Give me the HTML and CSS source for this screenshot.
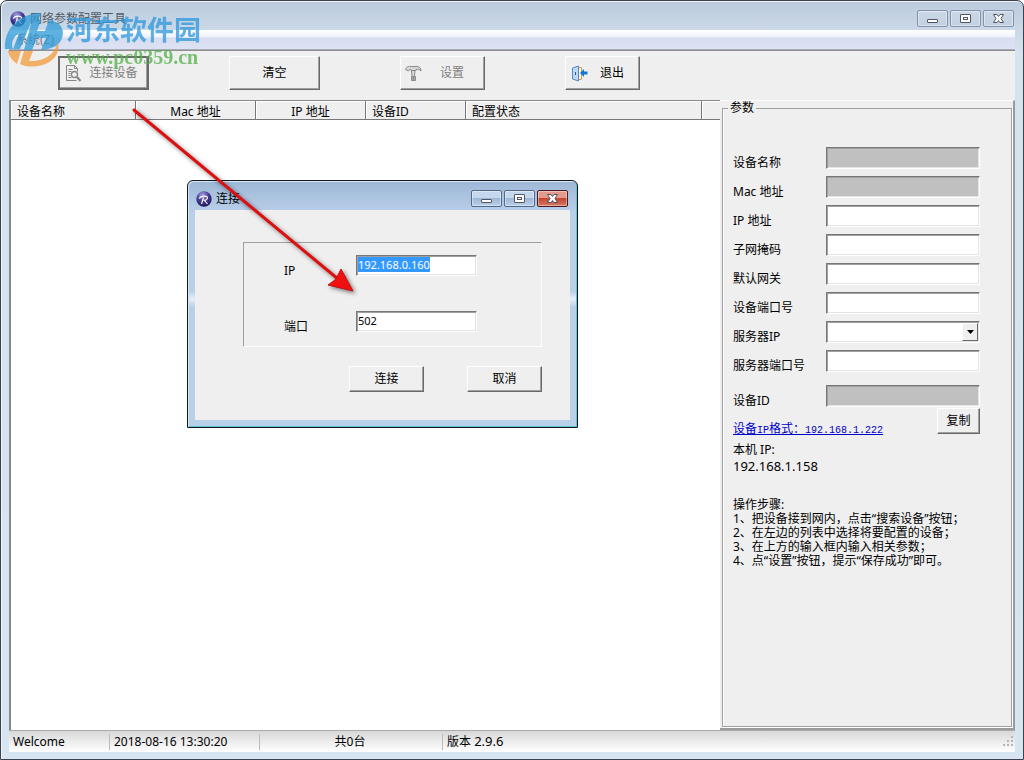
FILE: index.html
```html
<!DOCTYPE html>
<html lang="zh-CN">
  <head>
    <meta charset="UTF-8" />
    <meta name="viewport" content="width=device-width, initial-scale=1.0" />
    <title>网络参数配置工具</title>
    <link rel="stylesheet" href="styles.css">
  </head>
  <body>
    <svg width="0" height="0" class="defs" aria-hidden="true">
      <defs>
        <radialGradient id="orb" cx="0.4" cy="0.25" r="0.8">
          <stop offset="0" stop-color="#aaa4e0" />
          <stop offset="0.5" stop-color="#453b94" />
          <stop offset="1" stop-color="#191350" />
        </radialGradient>
      </defs>
      <symbol id="app-icon" viewBox="0 0 16 16">
        <circle cx="8" cy="8" r="7.7" fill="url(#orb)" />
        <path d="M3 7.500C5 4.500 11 4.500 11.500 6.500S9 9.300 7.500 9.300M7.500 6.500L5.500 13M8.500 9.500l3 3.500" fill="none" stroke="#fff" stroke-width="1.1" />
      </symbol>
      <symbol id="min-icon" viewBox="0 0 14 10">
        <rect x="1.5" y="5.5" width="10" height="3" rx="0.5" fill="#fff" stroke="#50555f" />
      </symbol>
      <symbol id="max-icon" viewBox="0 0 14 10">
        <rect x="1.5" y="0.5" width="10" height="8" rx="0.5" fill="#fff" stroke="#50555f" />
        <rect x="4.5" y="3.5" width="4" height="2" fill="#fff" stroke="#50555f" />
      </symbol>
      <symbol id="close-icon" viewBox="0 0 14 10">
        <path d="M1.500.5h3.500l1.500 2 1.500-2h3.500L9 4.500l2.500 4H8l-1.500-2-1.500 2H1.500L4 4.500z" fill="#fff" stroke="#50555f" />
      </symbol>
    </svg>

    <div class="window">
      <header class="titlebar">
        <svg class="app-icon"><use href="#app-icon" /></svg>
        <h1 class="title">网络参数配置工具</h1>
        <div class="window-buttons">
          <button aria-label="最小化"><svg><use href="#min-icon" /></svg></button>
          <button aria-label="最大化"><svg><use href="#max-icon" /></svg></button>
          <button aria-label="关闭"><svg><use href="#close-icon" /></svg></button>
        </div>
      </header>
      <nav class="menubar"><button class="menu-item">系统(Z)</button></nav>

      <div class="toolbar">
        <button class="btn tool-btn default" disabled>
          <svg class="tool-icon" viewBox="0 0 17 17" fill="none" stroke="#858585">
            <path d="M11.500 15.500h-10v-15h8l3 3v3M9.500.5v3h3M3.500 4.500h4M3.500 6.500h3M3.500 8.500h2M3.500 10.500h2M3.500 12.500h3" />
            <circle cx="9.500" cy="9.500" r="3" fill="#eee" stroke-width="1.300" />
            <path d="M12 12l3.500 4" stroke-width="2" />
          </svg>
          <span>连接设备</span>
        </button>
        <button class="btn tool-btn clear">清空</button>
        <button class="btn tool-btn setup" disabled>
          <svg class="tool-icon" viewBox="0 0 17 17" fill="#d8d8d8" stroke="#8a8a8a">
            <path d="M.5 4.500C1.500 1.500 4 1 6 1.500h6c2.500 0 4 1.500 4 4.500-1.500-1.500-3-2-5-1.500v1H6v-1c-1.500 0-2 .5-2.500 1.500z" />
            <path d="M6.500 5.500h3.500l-.5 6h-2.500z" />
            <path d="M6.500 11.500h4v4h-4zM8.500 12v4" fill="#aaa" />
          </svg>
          <span>设置</span>
        </button>
        <button class="btn tool-btn exit">
          <svg class="tool-icon" viewBox="0 0 17 17">
            <path d="M6 2.500h4.500v12H6" fill="#fff3d8" stroke="#d99b48" />
            <path d="M1.500 3l6-2v15l-6-2z" fill="#bcd8f8" stroke="#5a83c8" />
            <path d="M4.500 7v3" stroke="#2458a8" />
            <path d="M9 8l4-4v2.500h3.500v3H13V12z" fill="#1476d2" />
          </svg>
          <span>退出</span>
        </button>
      </div>

      <main class="content">
        <div class="device-list">
          <table>
            <thead>
              <tr>
                <th class="col-name">设备名称</th>
                <th class="col-mac">Mac 地址</th>
                <th class="col-ip">IP 地址</th>
                <th class="col-id">设备ID</th>
                <th class="col-state">配置状态</th>
                <th></th>
              </tr>
            </thead>
          </table>
        </div>

        <aside class="side">
          <fieldset class="params">
            <legend>参数</legend>
            <div class="field"><label for="name">设备名称</label><input id="name" disabled></div>
            <div class="field"><label for="mac">Mac 地址</label><input id="mac" disabled></div>
            <div class="field"><label for="ip">IP 地址</label><input id="ip"></div>
            <div class="field"><label for="mask">子网掩码</label><input id="mask"></div>
            <div class="field"><label for="gateway">默认网关</label><input id="gateway"></div>
            <div class="field"><label for="port">设备端口号</label><input id="port"></div>
            <div class="field">
              <label for="server">服务器IP</label>
              <div class="combo">
                <select id="server"><option></option></select>
                <span class="combo-arrow"><svg viewBox="0 0 7 4"><path d="M0 0h7L3.500 4z" /></svg></span>
              </div>
            </div>
            <div class="field"><label for="server-port">服务器端口号</label><input id="server-port"></div>
            <div class="field device-id"><label for="device-id">设备ID</label><input id="device-id" disabled></div>
            <div class="format-row">
              <a class="format-link" href="#">设备<span class="mono">IP</span>格式：<span class="mono">192.168.1.222</span></a>
              <button class="btn copy-btn">复制</button>
            </div>
            <p class="local-ip">本机 IP:<br><span class="latin">192.168.1.158</span></p>
            <div class="steps">
              <p>操作步骤:</p>
              <p>1、把设备接到网内，点击“搜索设备”按钮；</p>
              <p>2、在左边的列表中选择将要配置的设备；</p>
              <p>3、在上方的输入框内输入相关参数；</p>
              <p>4、点“设置”按钮，提示“保存成功”即可。</p>
            </div>
          </fieldset>
        </aside>
      </main>

      <footer class="statusbar">
        <span class="pane pane-welcome">Welcome</span>
        <span class="pane pane-time">2018-08-16 13:30:20</span>
        <span class="pane pane-count">共0台</span>
        <span class="pane pane-version">版本 <span class="latin">2.9.6</span></span>
        <svg class="grip" viewBox="0 0 11 11" fill="#b5b5b5">
          <path d="M8 0h2v2H8zM8 4h2v2H8zM4 4h2v2H4zM8 8h2v2H8zM4 8h2v2H4zM0 8h2v2H0z" />
        </svg>
      </footer>
    </div>

    <section class="dialog" role="dialog" aria-labelledby="dialog-title">
      <header class="titlebar">
        <svg class="app-icon"><use href="#app-icon" /></svg>
        <h2 class="title" id="dialog-title">连接</h2>
        <div class="window-buttons">
          <button aria-label="最小化"><svg><use href="#min-icon" /></svg></button>
          <button aria-label="最大化"><svg><use href="#max-icon" /></svg></button>
          <button class="close" aria-label="关闭"><svg><use href="#close-icon" /></svg></button>
        </div>
      </header>
      <form class="dialog-body">
        <div class="group">
          <div class="field"><label for="connect-ip">IP</label><input id="connect-ip" value="192.168.0.160" autofocus></div>
          <div class="field"><label for="connect-port">端口</label><input id="connect-port" value="502"></div>
        </div>
        <div class="dialog-buttons">
          <button type="button" class="btn">连接</button>
          <button type="button" class="btn">取消</button>
        </div>
      </form>
    </section>

    <div class="watermark">
      <svg class="watermark-logo" viewBox="0 0 60 56">
        <path d="M1 38C0 18 14 3 37 2l-3 7h-6L18 33l-2 5H9l6-16C8 27 7 33 9 38z" fill="#2c9bd8" />
        <path d="M28 9h9l-4 11h8l4-11c8 1 14 6 14 13-1 12-9 16-22 17l5-12h-9l-5 12h-8z" fill="#2c9bd8" />
        <path d="M4 40h13l-4 13C9 50 5 46 4 40z" fill="#f29a3a" />
        <path d="M20 40h9l-4 10h6c14-2 20-9 23-19 3 13-7 22-20 24-6 1-12 1-18-2z" fill="#f29a3a" />
      </svg>
      <div class="watermark-text">
        <span class="watermark-name">河东软件园</span>
        <span class="watermark-url">www.pc0359.cn</span>
      </div>
    </div>

    <svg class="arrow" viewBox="0 0 230 192">
      <path d="M4 3L208 172" stroke="#dc1010" stroke-width="3" stroke-linecap="round" />
      <path d="M223 184L198 178l7-5 2-3 4-8z" fill="#f01010" stroke="#c80c0c" />
    </svg>

    <script>
      document.getElementById('connect-ip').focus();
      document.getElementById('connect-ip').select();
    </script>
  </body>
</html>
```
FILE: styles.css
```css
* {
  box-sizing: border-box;
}

body {
  margin: 0;
  background: #fff;
  color: #000;
  font: 12px/14px 'Noto Sans', 'Noto Sans CJK SC', sans-serif;
}

button,
input,
select {
  font: inherit;
  color: inherit;
  margin: 0;
}

p {
  margin: 0;
}

.defs {
  position: absolute;
}

.latin {
  font-size: 13px;
}

.mono {
  font-family: 'Liberation Mono', monospace;
  font-size: 10px;
}

/* window frame */

.window {
  min-height: 100vh;
  display: flex;
  flex-direction: column;
  padding: 0 8px 7px;
  border: 1px solid #3c424b;
  border-radius: 7px 7px 0 0;
  background: linear-gradient(#bccbdc, #d5e2ef 50px, #d7e4f1);
  box-shadow: inset 1px 1px #eef4fa;
}

.titlebar {
  height: 29px;
  display: flex;
  align-items: center;
  gap: 4px;
  padding: 6px 1px 0;
}

.app-icon {
  width: 16px;
  height: 16px;
}

.title {
  flex: 1;
  margin: 0;
  font-size: 12px;
  font-weight: normal;
}

.window > .titlebar .title {
  color: #555d68;
}

.window-buttons {
  display: flex;
  gap: 2px;
}

.window-buttons button {
  width: 31px;
  height: 17px;
  display: grid;
  place-items: center;
  padding: 0;
  border: 1px solid #8291ad;
  border-radius: 2px;
  background: linear-gradient(#cbd7e6, #c2d0e1);
  box-shadow: inset 0 0 0 1px rgba(255, 255, 255, 0.4);
}

.window-buttons svg {
  width: 14px;
  height: 10px;
}

.menubar {
  height: 20px;
  display: flex;
  align-items: center;
  padding-left: 7px;
  border-bottom: 1px solid #a9adba;
  background: linear-gradient(#fff, #eff2fa 7px, #d7dcef 8px, #dde2f3);
}

.menu-item {
  padding: 0;
  border: 0;
  background: none;
  color: #777;
}

/* buttons */

.btn {
  display: flex;
  align-items: center;
  justify-content: center;
  padding: 0;
  border: 1px solid;
  border-color: #fff #696969 #696969 #fff;
  background: #efefef;
  box-shadow: inset -1px -1px #a0a0a0;
}

.btn:disabled {
  color: #808080;
}

.toolbar {
  height: 50px;
  display: flex;
  align-items: flex-end;
  gap: 80px;
  padding: 0 49px 10px;
  border-top: 1px solid #8e8e8e;
  background: #efefef;
}

.tool-btn {
  height: 34px;
}

.tool-icon {
  width: 17px;
  height: 17px;
}

.default {
  width: 91px;
  gap: 7px;
  padding-right: 4px;
  border: 2px solid #6a6a6a;
}

.clear {
  width: 91px;
}

.setup {
  width: 85px;
  gap: 18px;
  padding-right: 16px;
}

.exit {
  width: 75px;
  gap: 12px;
  padding-right: 10px;
}

/* device list */

.content {
  flex: 1;
  display: flex;
  background: #efefef;
}

.device-list {
  flex: 1;
  border: 1px solid #888;
  border-width: 1px 0 0 2px;
  background: #fff;
}

.device-list table {
  width: 100%;
  table-layout: fixed;
  border-collapse: separate;
  border-spacing: 0;
}

.device-list th {
  height: 19px;
  padding: 3px 6px 0;
  border: 1px solid #777;
  border-width: 0 1px 1px 0;
  background: #efefef;
  box-shadow: inset 1px 1px #fff;
  font-weight: normal;
  line-height: 14px;
  text-align: left;
}

.device-list th:last-child {
  border-right: 0;
}

.device-list .col-name {
  width: 125px;
}

.device-list .col-mac {
  width: 120px;
  text-align: center;
}

.device-list .col-ip {
  width: 110px;
  text-align: center;
}

.device-list .col-id {
  width: 100px;
}

.device-list .col-state {
  width: 236px;
}

/* parameters */

.side {
  width: 295px;
  display: flex;
  padding: 0 1px 1px 2px;
  border-right: 2px solid #9a9a9a;
  border-bottom: 2px solid #9a9a9a;
  border-top: 1px solid #fff;
}

.params {
  flex: 1;
  min-width: 0;
  margin: 0;
  padding: 32px 31px 0 10px;
  border: 1px solid #a0a0a0;
  box-shadow: inset 1px 0 #fff, 1px 1px #fff;
}

.params legend {
  margin-left: -5px;
  padding: 0 2px;
}

.params .field {
  display: grid;
  grid-template-columns: 93px 1fr;
  margin-bottom: 6px;
}

.field label {
  padding-top: 9px;
}

.field input,
.field select {
  width: 100%;
  height: 22px;
  min-width: 0;
  padding: 0 1px;
  border: 1px solid;
  border-color: #777 #fff #fff #777;
  border-radius: 0;
  outline: 0;
  background: #fff;
  box-shadow: inset 1px 1px #a0a0a0, inset -1px -1px #e3e3e3;
}

.field input:disabled {
  background: #c0c0c0;
}

.combo {
  position: relative;
}

.combo select {
  appearance: none;
}

.combo-arrow {
  position: absolute;
  top: 2px;
  right: 2px;
  width: 16px;
  height: 18px;
  display: grid;
  place-items: center;
  border: 1px solid;
  border-color: #fff #696969 #696969 #fff;
  background: #efefef;
  pointer-events: none;
}

.combo-arrow svg {
  width: 7px;
  height: 4px;
}

.params .device-id {
  margin: 12px 0 0;
}

.format-row {
  display: flex;
  align-items: flex-start;
  justify-content: space-between;
}

.format-link {
  padding-top: 14px;
  color: #0000c8;
  white-space: nowrap;
}

.copy-btn {
  width: 43px;
  height: 26px;
}

.local-ip {
  margin-top: 3px;
  line-height: 17px;
}

.steps {
  margin: 23px -31px 0 0;
  white-space: nowrap;
}

/* status bar */

.statusbar {
  height: 22px;
  display: flex;
  align-items: center;
  border-top: 1px solid #aaa;
  background: linear-gradient(#d8d8d8, #fff);
}

.pane {
  padding-left: 4px;
  border-right: 1px solid #bbb;
  line-height: 16px;
}

.pane-welcome {
  width: 101px;
}

.pane-time {
  width: 150px;
}

.pane-count {
  width: 183px;
  padding-right: 6px;
  text-align: center;
}

.pane-version {
  flex: 1;
  border-right: 0;
}

.grip {
  width: 11px;
  height: 11px;
  margin-right: 1px;
}

/* connect dialog */

.dialog {
  position: absolute;
  top: 180px;
  left: 187px;
  width: 391px;
  padding: 0 7px 7px;
  border: 1px solid #14181e;
  border-radius: 6px 6px 0 0;
  background: linear-gradient(#9db7d6, #b9d0e9 32px, #b9d0e9 110px, #e4eefa 118px, #b9d0e9 126px);
  box-shadow: inset 1px 1px #d5e6f5, inset -1px -1px #5ec4d4;
}

.dialog .titlebar {
  padding-right: 2px;
}

.dialog .window-buttons button {
  border-color: #53698c;
  background: linear-gradient(#c4d7ec 45%, #9db8d6 50%, #b8d1ea);
}

.dialog .window-buttons .close {
  border-color: #4c1a1c;
  background: linear-gradient(#e39a8c 45%, #c04632 50%, #d97a61);
}

.dialog-body {
  padding: 32px 28px 28px 48px;
  background: #efefef;
}

.group {
  display: grid;
  gap: 33px;
  padding: 12px 64px 12px 40px;
  border: 1px solid;
  border-color: #a0a0a0 #fff #fff #a0a0a0;
}

.group .field {
  display: grid;
  grid-template-columns: 72px 1fr;
}

.group .field input {
  height: 21px;
  padding-bottom: 2px;
  font-size: 11px;
}

.group input::selection {
  background: #3399ff;
  color: #fff;
}

.dialog-buttons {
  display: flex;
  justify-content: flex-end;
  gap: 43px;
  margin-top: 19px;
}

.dialog-buttons .btn {
  width: 75px;
  height: 26px;
}

/* overlays */

.watermark {
  position: absolute;
  top: 11px;
  left: 4px;
  display: flex;
  gap: 2px;
  pointer-events: none;
  opacity: 0.75;
}

.watermark-logo {
  width: 60px;
  height: 56px;
}

.watermark-text {
  display: flex;
  flex-direction: column;
  padding-top: 3px;
}

.watermark-name {
  color: #2c96dc;
  font-size: 27px;
  font-weight: bold;
  line-height: 32px;
}

.watermark-url {
  color: #52b04a;
  font: bold 20px/22px 'Liberation Serif', serif;
}

.arrow {
  position: absolute;
  top: 107px;
  left: 130px;
  width: 230px;
  height: 192px;
  fill: none;
  pointer-events: none;
  filter: drop-shadow(2px 2px 2px rgba(0, 0, 0, 0.5));
}
```
